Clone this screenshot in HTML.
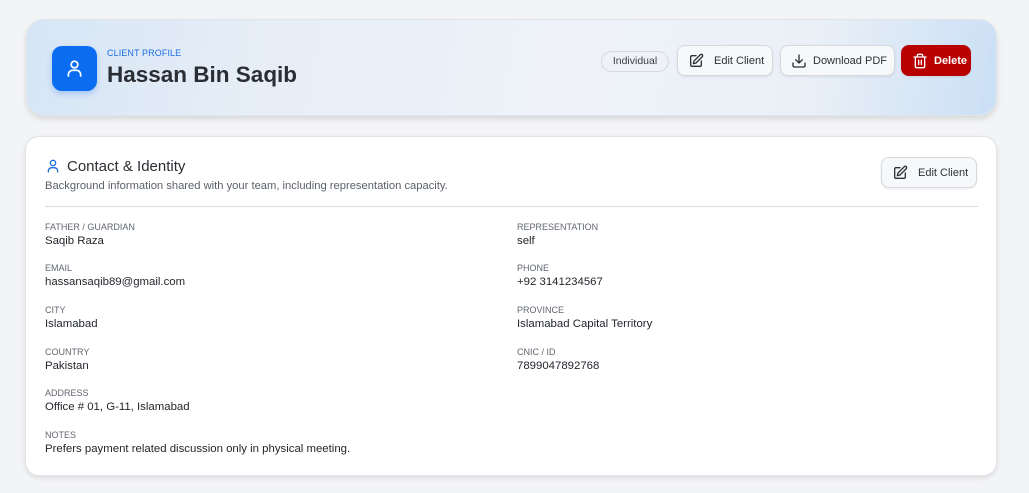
<!DOCTYPE html>
<html><head><style>
*{box-sizing:border-box;margin:0;padding:0}
body{width:1029px;height:493px;background:#f3f4f6;font-family:"Liberation Sans",sans-serif;position:relative;overflow:hidden;color:#1f2937}
.hdr{position:absolute;left:26px;top:19px;width:971px;height:97px;border-radius:18px;background:linear-gradient(100deg,#d6e5f6 0%,#e7eef7 25%,#eef2f8 55%,#ebf0f7 80%,#cadff5 100%);box-shadow:0 3px 6px rgba(0,0,0,.12);border:1px solid #e0e6ee}
.av{position:absolute;left:25px;top:26px;width:45px;height:45px;border-radius:10px;background:#0a6cf0;box-shadow:0 3px 6px rgba(10,108,240,.25)}
.av svg{position:absolute;left:12px;top:12px}
.kicker{position:absolute;left:80px;top:28px;font-size:9px;color:#1a6fe0;letter-spacing:.1px}
.name{position:absolute;left:80px;top:42px;font-size:22.5px;font-weight:bold;color:#2a2d33}
.btn{position:absolute;height:31px;border-radius:8px;background:#f7f8fa;border:1px solid #d5d9df;font-size:11px;color:#2d3138;display:flex;align-items:center;box-shadow:0 1px 2px rgba(0,0,0,.08);white-space:nowrap}
.btn svg{margin-left:10px;margin-right:10px}
.pill{position:absolute;left:574px;top:31px;width:68px;height:21px;border-radius:11px;border:1px solid #d5d9df;background:#eef1f5;font-size:10.5px;color:#3a3f47;text-align:center;line-height:19px}
.card{position:absolute;left:25px;top:136px;width:972px;height:340px;background:#fff;border-radius:14px;border:1px solid #e2e5e9;box-shadow:0 2px 5px rgba(0,0,0,.1)}
.ttl{position:absolute;left:41px;top:21px;font-size:15px;color:#2a2d33}
.sub{position:absolute;left:19px;top:43px;font-size:11.2px;color:#5b616b}
.hr{position:absolute;left:19px;top:69px;width:933px;height:1px;background:#d9dce0}
.f{position:absolute;font-size:9px;color:#60666f}
.f b{display:block;font-weight:normal;font-size:11.4px;color:#22262c;margin-top:3px}
</style></head><body>
<div class="hdr">
 <div class="av"><svg width="21" height="21" viewBox="0 0 24 24" fill="none" stroke="#fff" stroke-width="2" stroke-linecap="round"><circle cx="12" cy="7.5" r="3.8"/><path d="M5 20.5v-1.5a5 5 0 0 1 5-5h4a5 5 0 0 1 5 5v1.5"/></svg></div>
 <div class="kicker">CLIENT PROFILE</div>
 <div class="name">Hassan Bin Saqib</div>
 <div class="pill">Individual</div>
 <div class="btn" style="left:650px;top:25px;width:96px"><svg width="16" height="16" viewBox="0 0 24 24" fill="none" stroke="#2d3138" stroke-width="2" stroke-linecap="round" stroke-linejoin="round"><path d="M12 4H6a2 2 0 0 0-2 2v12a2 2 0 0 0 2 2h12a2 2 0 0 0 2-2v-6"/><path d="M18.4 2.6a2.1 2.1 0 0 1 3 3L12 15l-4 1 1-4z"/></svg>Edit Client</div>
 <div class="btn" style="left:753px;top:25px;width:115px"><svg style="margin-right:6px" width="16" height="16" viewBox="0 0 24 24" fill="none" stroke="#2d3138" stroke-width="2" stroke-linecap="round" stroke-linejoin="round"><path d="M21 15v4a2 2 0 0 1-2 2H5a2 2 0 0 1-2-2v-4"/><path d="M7 10l5 5 5-5M12 15V3"/></svg>Download PDF</div>
 <div class="btn" style="left:874px;top:25px;width:70px;background:#b80000;border-color:#b80000;color:#fff;font-weight:bold"><svg style="margin-right:6px" width="16" height="16" viewBox="0 0 24 24" fill="none" stroke="#fff" stroke-width="2" stroke-linecap="round" stroke-linejoin="round"><path d="M3 6h18M19 6v14a2 2 0 0 1-2 2H7a2 2 0 0 1-2-2V6M8 6V4a2 2 0 0 1 2-2h4a2 2 0 0 1 2 2v2M10 11v6M14 11v6"/></svg>Delete</div>
</div>
<div class="card">
 <svg style="position:absolute;left:19px;top:21px" width="16" height="16" viewBox="0 0 24 24" fill="none" stroke="#1a6fe0" stroke-width="2" stroke-linecap="round"><circle cx="12" cy="7.5" r="4"/><path d="M5 21v-1.5a5 5 0 0 1 5-5h4a5 5 0 0 1 5 5V21"/></svg>
 <div class="ttl">Contact &amp; Identity</div>
 <div class="sub">Background information shared with your team, including representation capacity.</div>
 <div class="btn" style="left:855px;top:20px;width:96px"><svg width="16" height="16" viewBox="0 0 24 24" fill="none" stroke="#2d3138" stroke-width="2" stroke-linecap="round" stroke-linejoin="round"><path d="M12 4H6a2 2 0 0 0-2 2v12a2 2 0 0 0 2 2h12a2 2 0 0 0 2-2v-6"/><path d="M18.4 2.6a2.1 2.1 0 0 1 3 3L12 15l-4 1 1-4z"/></svg>Edit Client</div>
 <div class="hr"></div>
 <div class="f" style="left:19px;top:85px">FATHER / GUARDIAN<b>Saqib Raza</b></div>
 <div class="f" style="left:491px;top:85px">REPRESENTATION<b>self</b></div>
 <div class="f" style="left:19px;top:126px">EMAIL<b>hassansaqib89@gmail.com</b></div>
 <div class="f" style="left:491px;top:126px">PHONE<b>+92 3141234567</b></div>
 <div class="f" style="left:19px;top:168px">CITY<b>Islamabad</b></div>
 <div class="f" style="left:491px;top:168px">PROVINCE<b>Islamabad Capital Territory</b></div>
 <div class="f" style="left:19px;top:210px">COUNTRY<b>Pakistan</b></div>
 <div class="f" style="left:491px;top:210px">CNIC / ID<b>7899047892768</b></div>
 <div class="f" style="left:19px;top:251px">ADDRESS<b>Office # 01, G-11, Islamabad</b></div>
 <div class="f" style="left:19px;top:293px">NOTES<b>Prefers payment related discussion only in physical meeting.</b></div>
</div>
</body></html>
